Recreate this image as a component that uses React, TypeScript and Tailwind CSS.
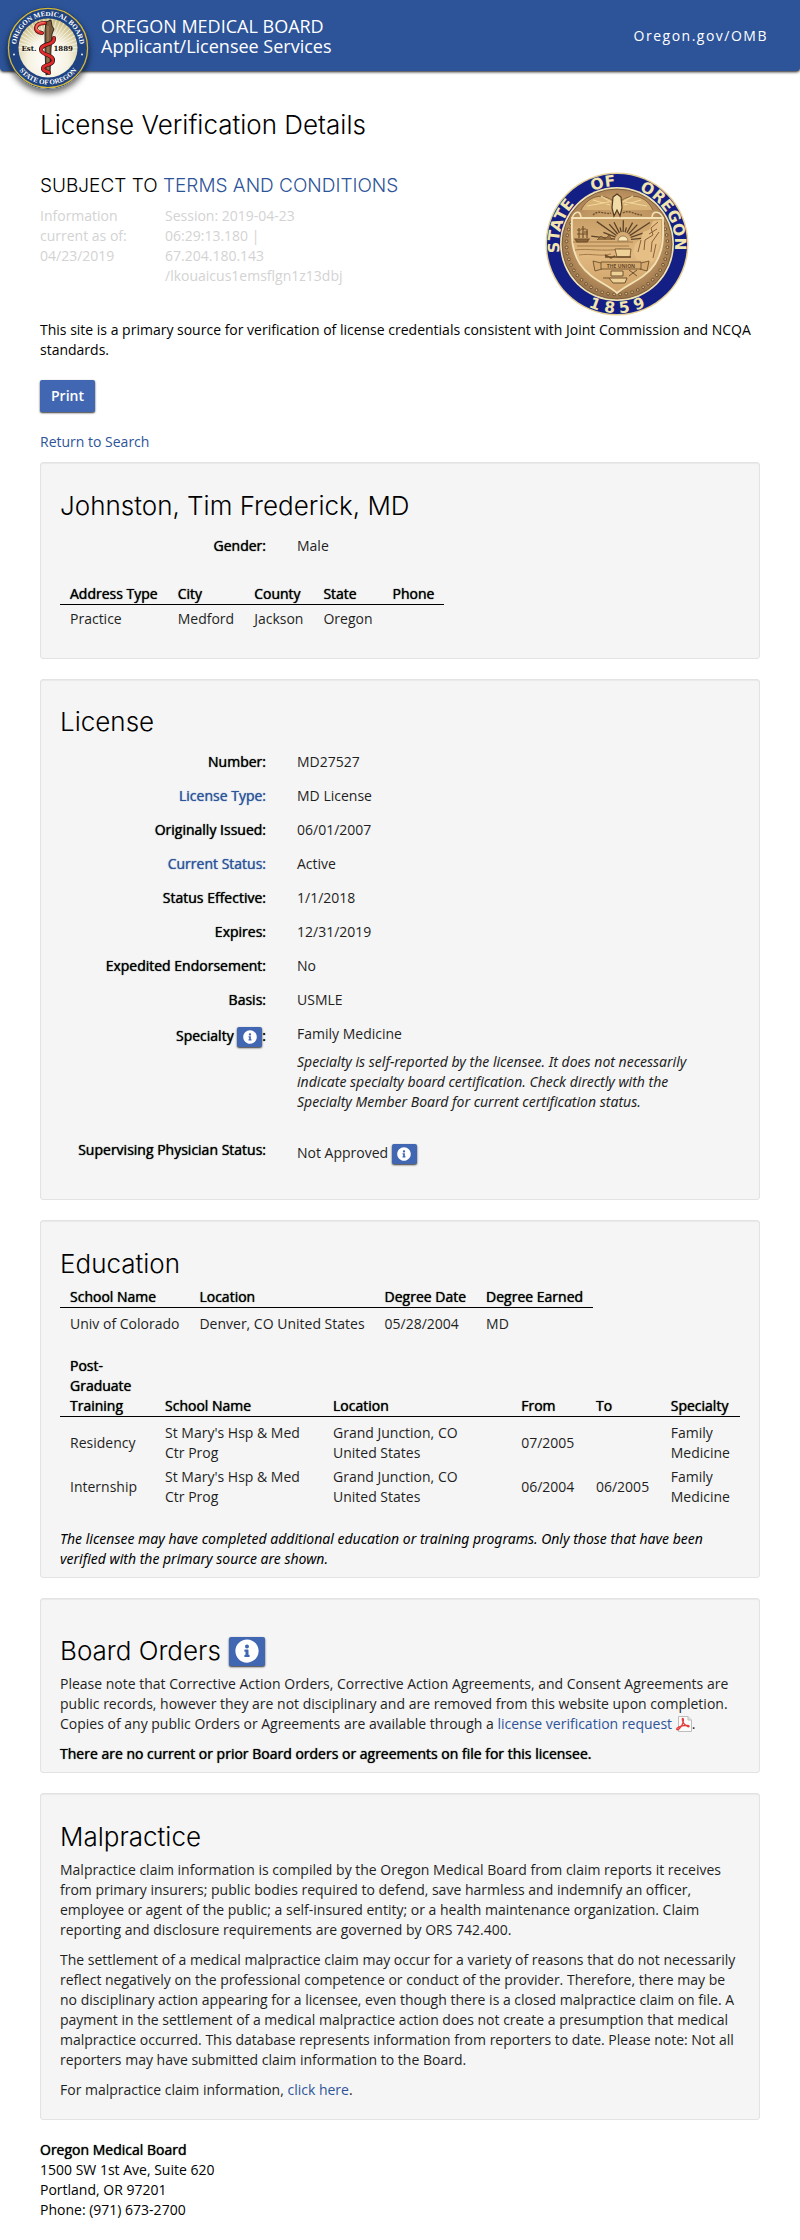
import type { ReactNode } from "react";
import { FaInfoCircle } from "react-icons/fa";

const point = (cx: number, cy: number, r: number, deg: number) => {
  const a = (deg * Math.PI) / 180;
  return [cx + r * Math.cos(a), cy + r * Math.sin(a)] as const;
};

function BoardLogo() {
  return (
    <svg viewBox="0 0 82 82" className="size-[82px] rounded-full shadow-[0_4px_6px_rgba(0,0,0,0.6)]" role="img" aria-label="Oregon Medical Board seal">
      <defs>
        <radialGradient id="cream" cx="50%" cy="70%" r="70%">
          <stop offset="0" stopColor="#ffffff" />
          <stop offset="0.5" stopColor="#f6f2e2" />
          <stop offset="1" stopColor="#c9ba7c" />
        </radialGradient>
        <clipPath id="logoInner"><circle cx="41" cy="41" r="29.5" /></clipPath>
        <path id="logoTop" d="M11 52 A32 32 0 1 1 71 52" />
        <path id="logoBottom" d="M4.5 41 A36.5 36.5 0 0 0 77.5 41" />
      </defs>
      <circle cx="41" cy="41" r="41" fill="#1d3a70" />
      <circle cx="41" cy="41" r="39.6" fill="#1f4381" stroke="#d6b93a" strokeWidth="1.3" />
      <circle cx="41" cy="41" r="29.5" fill="url(#cream)" />
      <g clipPath="url(#logoInner)" stroke="#ffffff" strokeWidth="0.8" opacity="0.75">
        {Array.from({ length: 25 }, (_, i) => {
          const [x, y] = point(41, 44, 40, 180 + i * 7.5);
          return <line key={i} x1="41" y1="44" x2={x} y2={y} />;
        })}
      </g>
      <g fill="#fff" fontFamily="'Liberation Serif', serif" fontWeight="700" fontSize="7" textAnchor="middle">
        <text><textPath href="#logoTop" startOffset="50%">OREGON MEDICAL BOARD</textPath></text>
        <text><textPath href="#logoBottom" startOffset="50%">STATE OF OREGON</textPath></text>
      </g>
      <circle cx="7" cy="47.500" r="0.9" fill="#fff" />
      <circle cx="75" cy="47.500" r="0.9" fill="#fff" />
      <path d="M39 15 L44 13 L45 19 L47 22 L45 27 L44 42 L43 66 L39 68 L38 42 L38 24 Z" fill="#7a5c3d" stroke="#1f1a16" strokeWidth="0.9" />
      <path d="M41 19 L41 64" stroke="#a88a62" strokeWidth="1" />
      <g fill="none" strokeLinecap="round">
        <path d="M38 16 C27 16 26 25 35 26 M47 31 C48 39 33 36 34 43 C35 49 47 47 46 54 C45 59 35 57 36 62 C37 65 42 64 42 66" stroke="#2b1111" strokeWidth="4" />
        <path d="M38 16 C27 16 26 25 35 26 M47 31 C48 39 33 36 34 43 C35 49 47 47 46 54 C45 59 35 57 36 62 C37 65 42 64 42 66" stroke="#e02b2b" strokeWidth="2.800" />
        <path d="M37 15.500 C28 16 28 22 32 24" stroke="#ef6f63" strokeWidth="1.500" />
      </g>
      <g fill="#15120f" fontFamily="'DejaVu Serif', serif" fontWeight="700" fontSize="7">
        <text x="14.500" y="43.500">Est.</text>
        <text x="46.500" y="43.500">1889</text>
      </g>
    </svg>
  );
}

function StateSeal() {
  return (
    <svg viewBox="0 0 144 144" className="size-36" role="img" aria-label="State of Oregon seal">
      <defs>
        <radialGradient id="bronze" cx="50%" cy="45%" r="55%">
          <stop offset="0" stopColor="#d9b078" />
          <stop offset="0.7" stopColor="#bd9360" />
          <stop offset="1" stopColor="#96714a" />
        </radialGradient>
        <linearGradient id="shield" x1="0" y1="0" x2="0" y2="1">
          <stop offset="0" stopColor="#c99f68" />
          <stop offset="0.5" stopColor="#e0b880" />
          <stop offset="1" stopColor="#cfa268" />
        </linearGradient>
        <path id="sealTop" d="M17.500 91.800 A58 58 0 1 1 126.500 91.800" />
        <path id="sealBottom" d="M3 72 A69 69 0 0 0 141 72" />
      </defs>
      <circle cx="72" cy="72" r="71.500" fill="#e5d196" />
      <circle cx="72" cy="72" r="70" fill="#141f85" />
      <circle cx="72" cy="72" r="57" fill="#f0e2b4" />
      <circle cx="72" cy="72" r="55" fill="url(#bronze)" stroke="#6f5233" strokeWidth="0.8" />
      <g fill="#f3e5ae" fontFamily="'DejaVu Sans', sans-serif" fontWeight="700" fontSize="15.500" textAnchor="middle">
        <text><textPath href="#sealTop" startOffset="17%">STATE</textPath></text>
        <text><textPath href="#sealTop" startOffset="44%">OF</textPath></text>
        <text><textPath href="#sealTop" startOffset="77%">OREGON</textPath></text>
        <text><textPath href="#sealBottom" startOffset="50%">1 8 5 9</textPath></text>
      </g>
      {Array.from({ length: 34 }, (_, i) => {
        const [x, y] = point(72, 72, 50.5, -24 + i * 6.9);
        return <circle key={i} cx={x} cy={y} r="1.400" fill="#d8b57e" stroke="#5e4529" strokeWidth="0.8" />;
      })}
      <path d="M27 46 H118 C118 62 120 76 110 92 C100 107 82 112 72 121 C62 112 45 107 35 92 C25 76 27 62 27 46 Z" fill="url(#shield)" stroke="#f3e2b5" strokeWidth="1.800" />
      <path d="M27 46 C30 39 35 38 36 45 M118 46 C115 39 108 38 107 45" fill="none" stroke="#f3e2b5" strokeWidth="1.600" />
      <g stroke="#5c4328" strokeWidth="1.300">
        {Array.from({ length: 13 }, (_, i) => {
          const [x1, y1] = point(78, 68, 8, 187 + i * 14);
          const [x2, y2] = point(78, 68, i % 2 ? 21 : 32, 187 + i * 14);
          return y2 > 48 ? <line key={i} x1={x1} y1={y1} x2={x2} y2={y2} /> : <line key={i} x1={x1} y1={y1} x2={78 + (x2 - 78) * 0.62} y2={68 + (y2 - 68) * 0.62} />;
        })}
      </g>
      <path d="M73 69 A5 5 0 0 1 83 69 Z" fill="#fae7b6" stroke="#705331" strokeWidth="0.6" />
      <path d="M28 70 H88 M32 74 H84 M30 78 C44 76 56 80 76 77 M34 83 C48 81 54 85 66 82" stroke="#a57b48" strokeWidth="1" fill="none" />
      <path d="M30 67 H44 L42 70 H32 Z M34 66 V56 M38 66 V54 M42 66 V57 M32 58 H36 M36 57 H41 M39 60 H43 M32 62 H43" fill="#8a6338" stroke="#71502c" strokeWidth="1.200" />
      <path d="M52 68 L56 64 L60 67 L64 63 L67 68" fill="#987042" stroke="#71502c" strokeWidth="0.8" />
      <path d="M116 48 L108 49 L104 58 L98 60 L96 67 L90 72 L88 80 L92 88 L108 90 L116 70 Z" fill="#e5bf85" />
      <path d="M113 50 L106 56 L108 63 L100 68 L99 78 M114 60 L107 70 L106 80 M96 68 L93 80 M111 72 L108 86 M104 62 L112 57" stroke="#876039" strokeWidth="1" fill="none" />
      <path d="M70 77 H86 L85 85 H72 Z" fill="#eed197" stroke="#77552f" strokeWidth="0.9" />
      <path d="M60 85 H86 M60 83 L66 86 L70 84" stroke="#6c4d2a" strokeWidth="1.400" fill="none" />
      <path d="M56 90 H96 V97 H56 Z M56 91 L48 89 L50 99 L57 97 M96 91 L104 89 L102 99 L95 97" fill="#d6ab70" stroke="#6f512e" strokeWidth="0.9" />
      <text x="76" y="96" textAnchor="middle" fontFamily="'Open Sans', sans-serif" fontWeight="700" fontSize="5" fill="#67492a">THE UNION</text>
      <path d="M66 99 H78 V104 H66 Z M64 106 H82 L80 111 H68 Z M84 104 L92 98 M84 98 L92 104 M58 106 H64" fill="#eed197" stroke="#6f512e" strokeWidth="1" />
      <path d="M36 38 C42 26 54 20 67 28 L70 38 M108 38 C102 26 90 20 77 28 L74 38" fill="#d8b176" stroke="#765532" strokeWidth="0.8" />
      <path d="M42 34 L64 30 M48 28 L65 33 M102 34 L80 30 M96 28 L79 33 M56 24 L66 30 M88 24 L78 30" stroke="#f0d59b" strokeWidth="1.200" />
      <path d="M68 25 L72 22 L76 25 L77 36 L75 44 L72 38 L69 44 L67 36 Z" fill="#f1dca8" stroke="#54391f" strokeWidth="1.200" />
      <path d="M48 43 C54 37 60 43 66 41 M78 41 C84 37 90 43 97 43" stroke="#6f512e" strokeWidth="1.400" fill="none" strokeDasharray="2 1" />
    </svg>
  );
}

function PdfIcon() {
  return (
    <svg viewBox="0 0 16 16" className="inline-block size-4 align-[-3px]" aria-hidden="true">
      <path d="M2.500 0.500 H12 L15.500 4 V15.500 H2.500 Z" fill="#fafafa" stroke="#bdbdbd" />
      <path d="M12 0.500 V4 H15.500" fill="#e4e4e4" stroke="#bdbdbd" />
      <path d="M6.500 2.500 C8 2 7.500 6 6 9 C4.500 12 2 14.500 0.800 13.500 C0 12 4 10 8 9.500 C11 9 13.500 9.500 13 10.500 C12 11.500 8 8.500 7 6 C6.200 4 6 3 6.500 2.500 Z" fill="none" stroke="#e2403d" strokeWidth="1.300" />
    </svg>
  );
}

function InfoButton({ large = false, label }: { large?: boolean; label: string }) {
  return (
    <button
      type="button"
      aria-label={label}
      className={
        "inline-flex items-center justify-center rounded-[2px] bg-[#4267b2] text-white shadow-[0_1px_2px_rgba(0,0,0,0.8)] " +
        (large ? "h-[29px] w-9 text-[24px]" : "h-5 w-[25px] align-middle text-[14px]")
      }
    >
      <FaInfoCircle />
    </button>
  );
}

const link = "text-[#2d5499] hover:underline";
const heavy = "font-medium [text-shadow:0_0_1px_currentColor]";
const note = "font-['Noto_Sans','Open_Sans',sans-serif] italic";

function Panel({ title, extra, className, children }: { title: string; extra?: ReactNode; className: string; children: ReactNode }) {
  return (
    <section className={"mb-5 rounded-[3px] border border-[#e3e3e3] bg-[#f5f5f5] px-[19px] shadow-[inset_0_1px_1px_rgba(0,0,0,0.05)] " + className}>
      <div className="mb-2 flex items-center gap-2">
        <h2 className="font-['Inter'] text-[26px] leading-[30px] font-light">{title}</h2>
        {extra}
      </div>
      {children}
    </section>
  );
}

function Field({ label, children }: { label: ReactNode; children: ReactNode }) {
  return (
    <div className="flex gap-[31px] py-[7px]">
      <dt className={"w-[206px] shrink-0 text-right " + heavy}>{label}</dt>
      <dd className="min-w-0 flex-1 text-[#1f1f1f]">{children}</dd>
    </div>
  );
}

function Table({ head, rows, widths, className = "", cell }: { head: string[]; rows: string[][]; widths?: string[]; className?: string; cell: string }) {
  return (
    <table className={className}>
      <thead>
        <tr className="border-b border-black">
          {head.map((h, i) => (
            <th key={h} scope="col" className={`px-[10px] text-left align-bottom ${heavy} ${widths ? widths[i] : ""}`}>
              {h}
            </th>
          ))}
        </tr>
      </thead>
      <tbody className={"text-[#1f1f1f] " + cell}>
        {rows.map((r, i) => (
          <tr key={i}>
            {r.map((c, j) => (
              <td key={j} className="px-[10px]">{c}</td>
            ))}
          </tr>
        ))}
      </tbody>
    </table>
  );
}

export default function App() {
  return (
    <div className="min-h-screen bg-white font-['Open_Sans',sans-serif] text-[14px] leading-5 text-black">
      <header className="flex h-[71px] items-start justify-between rounded-b-[4px] bg-[#2d5499] pr-8 pl-[7px] text-white shadow-[0_1px_3px_rgba(0,0,0,0.9)]">
        <div className="flex gap-3 pt-[7px]">
          <BoardLogo />
          <div className="pt-[9px] text-[18px] leading-5">
            <p>OREGON MEDICAL BOARD</p>
            <p>Applicant/Licensee Services</p>
          </div>
        </div>
        <a href="#omb" className="pt-[26px] tracking-[1.5px]">Oregon.gov/OMB</a>
      </header>

      <main className="px-10">
        <h1 className="pt-[39px] font-['Inter'] text-[26px] leading-[30px] font-light">License Verification Details</h1>
        <div className="mt-8 flex items-start justify-between">
          <div>
            <h2 className="pt-[2px] font-['Inter'] text-[19px] leading-6 font-light">
              SUBJECT TO <a href="#terms" className={link}>TERMS AND CONDITIONS</a>
            </h2>
            <div className="mt-2 flex text-[#d3d3d3]">
              <p className="w-[125px] pr-8">Information current as of: 04/23/2019</p>
              <p className="w-[190px]">
                Session: 2019-04-23 06:29:13.180 | 67.204.180.143 /lkouaicus1emsflgn1z13dbj
              </p>
            </div>
          </div>
          <div className="mr-[71px]"><StateSeal /></div>
        </div>
        <p className="mt-1">
          This site is a primary source for verification of license credentials consistent with Joint Commission and NCQA standards.
        </p>
        <button type="button" className="mt-5 block h-8 rounded-[2px] bg-[#4267b2] px-[11px] font-semibold text-white shadow-[0_1px_2px_rgba(0,0,0,0.8)]">
          Print
        </button>
        <a href="#search" className={"mt-5 mb-[10px] block w-fit " + link}>Return to Search</a>

        <Panel title="Johnston, Tim Frederick, MD" className="pt-[28px] pb-[29px]">
          <dl><Field label="Gender:">Male</Field></dl>
          <Table
            className="mt-[21px]"
            head={["Address Type", "City", "County", "State", "Phone"]}
            rows={[["Practice", "Medford", "Jackson", "Oregon", ""]]}
            cell="[&_td]:pt-1"
          />
        </Panel>

        <Panel title="License" className="pt-[27px] pb-[28px]">
          <dl>
            <Field label="Number:">MD27527</Field>
            <Field label={<a href="#type" className={link}>License Type:</a>}>MD License</Field>
            <Field label="Originally Issued:">06/01/2007</Field>
            <Field label={<a href="#status" className={link}>Current Status:</a>}>Active</Field>
            <Field label="Status Effective:">1/1/2018</Field>
            <Field label="Expires:">12/31/2019</Field>
            <Field label="Expedited Endorsement:">No</Field>
            <Field label="Basis:">USMLE</Field>
            <Field label={<span className="inline-block pt-[2px]">Specialty <InfoButton label="About specialty" />:</span>}>
              Family Medicine
              <p className={"mt-2 mb-1 pr-5 " + note}>
                Specialty is self-reported by the licensee. It does not necessarily indicate specialty board certification. Check
                directly with the Specialty Member Board for current certification status.
              </p>
            </Field>
            <div className="pt-[10px]">
              <Field label="Supervising Physician Status:">
                <span className="inline-block pt-[3px]">Not Approved <InfoButton label="About supervising status" /></span>
              </Field>
            </div>
          </dl>
        </Panel>

        <Panel title="Education" className="pt-[28px] pb-2">
          <Table
            head={["School Name", "Location", "Degree Date", "Degree Earned"]}
            rows={[["Univ of Colorado", "Denver, CO United States", "05/28/2004", "MD"]]}
            cell="[&_td]:py-[6px]"
          />
          <Table
            className="mt-4 mb-5 w-full"
            head={["Post-Graduate Training", "School Name", "Location", "From", "To", "Specialty"]}
            widths={["w-[14%]", "w-[25%]", "w-[28%]", "w-[11%]", "w-[11%]", "w-[11%]"]}
            rows={[
              ["Residency", "St Mary's Hsp & Med Ctr Prog", "Grand Junction, CO United States", "07/2005", "", "Family Medicine"],
              ["Internship", "St Mary's Hsp & Med Ctr Prog", "Grand Junction, CO United States", "06/2004", "06/2005", "Family Medicine"],
            ]}
            cell="[&_td]:py-[2px] [&_tr:first-child_td]:pt-[6px]"
          />
          <p className={note}>
            The licensee may have completed additional education or training programs. Only those that have been verified with the
            primary source are shown.
          </p>
        </Panel>

        <Panel title="Board Orders" extra={<InfoButton large label="About board orders" />} className="pt-[37px] pb-2">
          <p className="text-[#1f1f1f]">
            Please note that Corrective Action Orders, Corrective Action Agreements, and Consent Agreements are public records,
            however they are not disciplinary and are removed from this website upon completion. Copies of any public Orders or
            Agreements are available through a <a href="#request" className={link}>license verification request <PdfIcon /></a>.
          </p>
          <p className={"mt-[10px] " + heavy}>There are no current or prior Board orders or agreements on file for this licensee.</p>
        </Panel>

        <Panel title="Malpractice" className="pt-[28px] pb-[19px]">
          <div className="flex flex-col gap-[10px] text-[#1f1f1f]">
            <p>
              Malpractice claim information is compiled by the Oregon Medical Board from claim reports it receives from primary
              insurers; public bodies required to defend, save harmless and indemnify an officer, employee or agent of the public;
              a self-insured entity; or a health maintenance organization. Claim reporting and disclosure requirements are
              governed by ORS 742.400.
            </p>
            <p>
              The settlement of a medical malpractice claim may occur for a variety of reasons that do not necessarily reflect
              negatively on the professional competence or conduct of the provider. Therefore, there may be no disciplinary action
              appearing for a licensee, even though there is a closed malpractice claim on file. A payment in the settlement of a
              medical malpractice action does not create a presumption that medical malpractice occurred. This database represents
              information from reporters to date. Please note: Not all reporters may have submitted claim information to the Board.
            </p>
            <p>For malpractice claim information, <a href="#claims" className={link}>click here</a>.</p>
          </div>
        </Panel>

        <footer>
          <address className="not-italic">
            <strong className={heavy}>Oregon Medical Board</strong><br />
            1500 SW 1st Ave, Suite 620<br />
            Portland, OR 97201<br />
            Phone: (971) 673-2700
          </address>
        </footer>
      </main>
    </div>
  );
}
